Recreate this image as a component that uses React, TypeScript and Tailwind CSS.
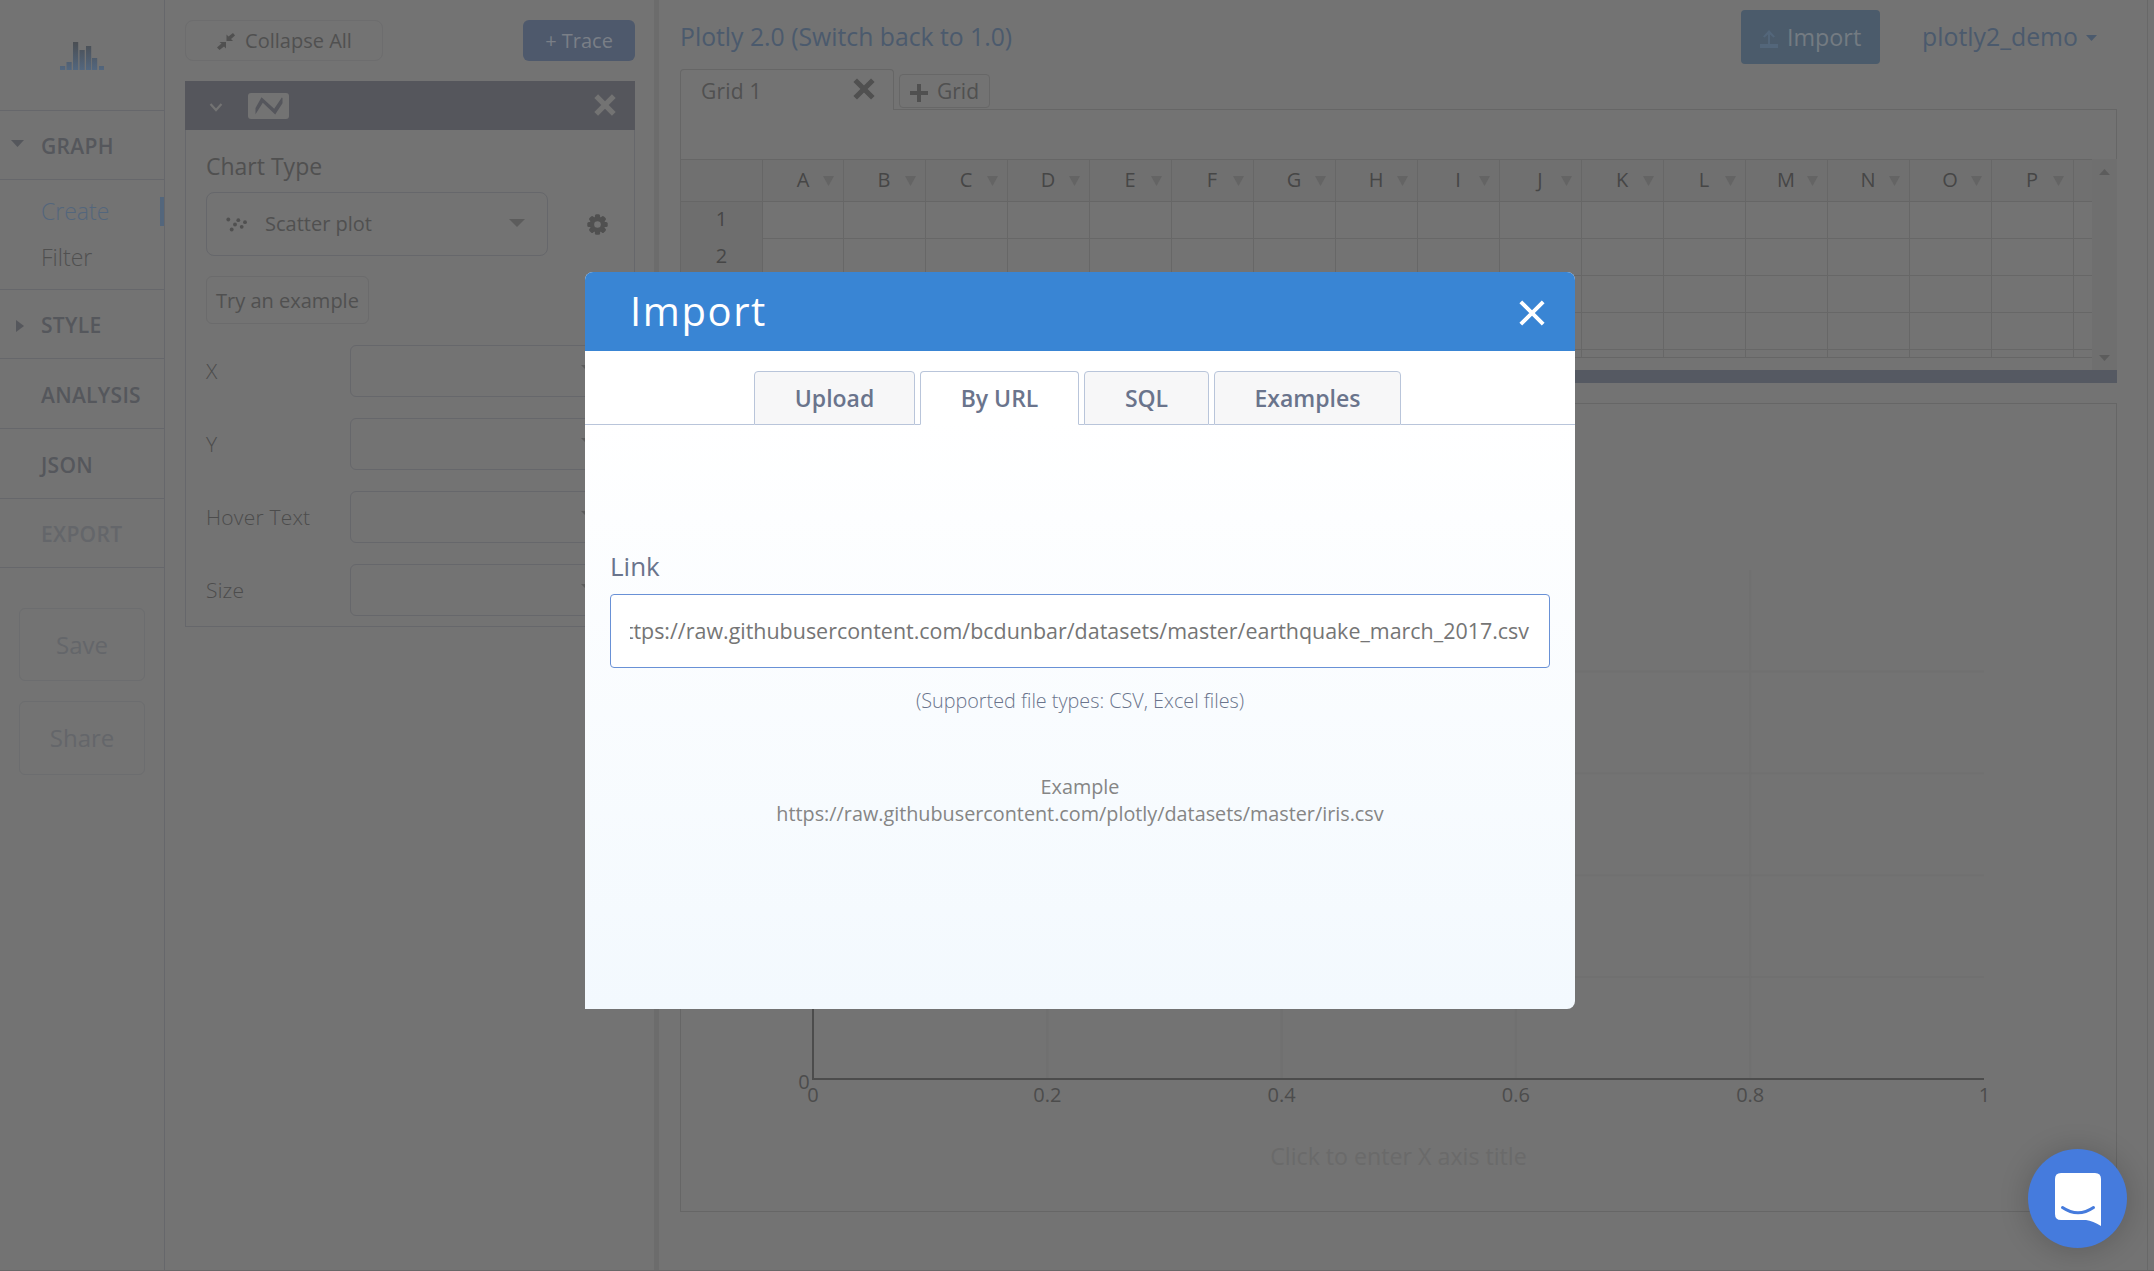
import React from "react";

const columns = "ABCDEFGHIJKLMNOP".split("");

function Logo() {
  const bars = [
    [0, 25, 4],
    [6.5, 21, 8],
    [13, 1, 28],
    [19.5, 9, 20],
    [26, 5, 24],
    [32, 17, 12],
    [39, 25, 4],
  ];
  return (
    <svg width="44" height="29" viewBox="0 0 44 29">
      <defs>
        <linearGradient id="logo" gradientUnits="userSpaceOnUse" x1="0" y1="0" x2="0" y2="29">
          <stop offset="0" stopColor="#4a4d51" />
          <stop offset="1" stopColor="#53677f" />
        </linearGradient>
      </defs>
      {bars.map(([x, y, h]) => (
        <rect key={x} x={x} y={y} width="5.2" height={h} fill="url(#logo)" />
      ))}
    </svg>
  );
}

function Cross({ size, width, className }: { size: number; width: number; className: string }) {
  return (
    <svg width={size} height={size} viewBox="0 0 20 20" className={className}>
      <path d="M2 2 L18 18 M18 2 L2 18" stroke="currentColor" strokeWidth={width} fill="none" />
    </svg>
  );
}

function NavHeading({ label, arrow, muted, height }: { label: string; arrow?: "down" | "right"; muted?: boolean; height: string }) {
  return (
    <div className={`flex items-center border-b border-[#66676b] ${height}`}>
      <div className="flex w-[41px] shrink-0 justify-end pr-[17px]">
        {arrow === "down" && (
          <svg width="13" height="7" viewBox="0 0 13 7" className="mb-1 text-[#55575c]">
            <path d="M0 0H13L6.5 7Z" fill="currentColor" />
          </svg>
        )}
        {arrow === "right" && (
          <svg width="8" height="12" viewBox="0 0 8 12" className="mt-1 text-[#55575c]">
            <path d="M0 0V12L8 6Z" fill="currentColor" />
          </svg>
        )}
      </div>
      <span className={`pt-0.5 text-[21px] leading-7 font-semibold tracking-[0.3px] ${muted ? "text-[#64666a]" : "text-[#55575c]"}`}>{label}</span>
    </div>
  );
}

function Sidebar() {
  return (
    <aside className="flex w-[165px] shrink-0 flex-col border-r border-[#66676b]">
      <div className="flex h-[111px] items-center justify-center border-b border-[#66676b]">
        <Logo />
      </div>
      <NavHeading label="GRAPH" arrow="down" height="h-[69px]" />
      <div className="flex h-[110px] flex-col border-b border-[#66676b] pt-[8px]">
        <div className="flex h-[46px] items-center justify-between pl-[41px]">
          <span className="text-[23px] font-light text-[#53667c]">Create</span>
          <span className="h-[29px] w-1 bg-[#53667c]" />
        </div>
        <div className="flex h-[46px] items-center pl-[41px] text-[23px] font-light text-[#505050]">Filter</div>
      </div>
      <NavHeading label="STYLE" arrow="right" height="h-[69px]" />
      <NavHeading label="ANALYSIS" height="h-[70px]" />
      <NavHeading label="JSON" height="h-[70px]" />
      <NavHeading label="EXPORT" muted height="h-[69px]" />
      <div className="flex flex-col gap-[20px] px-[19px] pt-[40px] text-2xl text-[#64666a]">
        <div className="flex h-[73px] items-center justify-center rounded-md border border-[#6c6d6f]">Save</div>
        <div className="flex h-[74px] items-center justify-center rounded-md border border-[#6c6d6f]">Share</div>
      </div>
    </aside>
  );
}

function Caret({ className }: { className: string }) {
  return (
    <svg width="16" height="8" viewBox="0 0 16 8" className={className}>
      <path d="M0 0H16L8 8Z" fill="currentColor" />
    </svg>
  );
}

function Gear() {
  return (
    <svg width="21" height="21" viewBox="-10.5 -10.5 21 21">
      {[0, 45, 90, 135].map((a) => (
        <rect key={a} x="-2.6" y="-10.2" width="5.2" height="20.4" rx="1.5" fill="#505050" transform={`rotate(${a})`} />
      ))}
      <circle r="7.8" fill="#505050" />
      <circle r="3.3" fill="#737373" />
    </svg>
  );
}

function TracePanel() {
  return (
    <section className="flex w-[489px] shrink-0 flex-col px-5 pt-5 pr-[19px]">
      <div className="flex h-[41px] justify-between">
        <div className="flex w-[198px] items-center justify-center gap-[9px] rounded-lg border border-[#6d6d6e] pl-px text-xl text-[#505050]">
          <svg width="19" height="17" viewBox="0 0 19 17" className="mt-0.5 text-[#505050]">
            <path d="M0 14.5 4.5 10.5 2.5 9H9V15.5L7 13.5 2.5 17ZM18 2.5 14 6 16 8H9.5V1.5L11.5 3.5 16 0Z" fill="currentColor" />
          </svg>
          <span>Collapse All</span>
        </div>
        <div className="flex w-[112px] items-center justify-center rounded-md bg-[#4e596c] text-xl text-[#7a7f87]">+ Trace</div>
      </div>
      <div className="mt-5 flex h-[49px] items-center bg-[#55565c] pr-[19px] pl-5 text-[#737373]">
        <svg width="14" height="9" viewBox="0 0 14 9" className="mt-1 ml-1">
          <path d="M1.5 1 7 7 12.500 1" stroke="currentColor" strokeWidth="2.2" fill="none" />
        </svg>
        <div className="ml-[25px] flex h-[26px] w-[41px] items-center justify-center rounded-[3px] bg-[#737373]">
          <svg width="28" height="18" viewBox="0 0 28 18">
            <path d="M0.500 17.300V11L6.500 0.200 19.200 11.700 26.800 0.500 27.500 1V6.300L20.200 17.500 7.800 5.700Z" fill="#55565c" />
          </svg>
        </div>
        <Cross size={22} width={4.8} className="mb-px ml-auto" />
      </div>
      <div className="flex h-[497px] flex-col border border-t-0 border-[#66676b] px-5">
        <div className="mt-[19px] flex h-[34px] items-center text-[23px] text-[#505050]">Chart Type</div>
        <div className="mt-[9px] flex h-[64px] items-center">
          <div className="flex h-full w-[342px] items-center rounded-lg border border-[#66676b] pr-5 pl-[19px] text-[#505050]">
            <svg width="22" height="15" viewBox="0 0 22 15">
              {[[2.3, 2.5], [12.3, 3.2], [19, 5.2], [9, 7.5], [15.7, 9.8], [5.7, 12.5]].map(([x, y]) => (
                <circle key={x} cx={x} cy={y} r="1.900" fill="currentColor" />
              ))}
            </svg>
            <span className="ml-[17px] text-xl">Scatter plot</span>
            <Caret className="mr-[2px] mb-0.5 ml-auto text-[#5c5c5c]" />
          </div>
          <div className="ml-[39px]">
            <Gear />
          </div>
        </div>
        <div className="mt-5 flex h-[48px] w-[163px] items-center justify-center rounded-md border border-[#6b6b6c] pt-0.5 text-xl whitespace-nowrap text-[#505050]">
          Try an example
        </div>
        <div className="mt-[21px] flex flex-col gap-[21px]">
          {["X", "Y", "Hover Text", "Size"].map((label) => (
            <div key={label} className="flex h-[52px] items-center">
              <span className="w-[144px] pt-0.5 text-[21px] font-light tracking-[0.2px] text-[#4c4c4c]">{label}</span>
              <div className="flex h-full flex-1 items-center justify-end rounded-md border border-[#66676b] pr-[16px]">
                <Caret className="mb-1 text-[#5c5c5c]" />
              </div>
            </div>
          ))}
        </div>
      </div>
    </section>
  );
}

function DataGrid() {
  return (
    <div className="flex h-[261px] flex-col border border-t-0 border-b-0 border-[#666]">
      <div className="h-[49px] shrink-0" />
      <div className="-mr-px flex h-[212px]">
        <div className="flex-1 overflow-hidden">
          <div className="flex h-[43px] border-y border-[#666] bg-[#707070]">
            <div className="w-[82px] shrink-0 border-r border-[#666]" />
            {columns.map((c, i) => (
              <div key={c} className={`flex shrink-0 items-center justify-between border-r border-[#676767] pr-[9px] pl-[20px] text-xl text-[#464646] ${i === 0 ? "w-[81px]" : "w-[82px]"}`}>
                <span className="w-[40px] pb-0.5 text-center">{c}</span>
                <svg width="11" height="10" viewBox="0 0 11 10">
                  <path d="M0 0H11L5.500 10Z" fill="#646464" />
                </svg>
              </div>
            ))}
          </div>
          <div className="h-[156px] overflow-hidden border-b border-[#666]">
            {["1", "2", "", "", ""].map((r, n) => (
              <div key={n} className="flex h-[37px]">
                <div className="flex w-[82px] shrink-0 items-center justify-center border-r border-[#666] bg-[#6e6e6e] pb-[3px] text-xl text-[#464646]">{r}</div>
                {columns.map((c, i) => (
                  <div key={c} className={`shrink-0 border-r border-b border-[#676767] ${i === 0 ? "w-[81px]" : "w-[82px]"}`} />
                ))}
                <div className="flex-1 border-b border-[#676767]" />
              </div>
            ))}
          </div>
        </div>
        <div className="flex w-[25px] flex-col items-center justify-between bg-[#6f6f6f] py-[10px]">
          <svg width="11" height="6" viewBox="0 0 11 6">
            <path d="M0 6H11L5.500 0Z" fill="#5c5c5c" />
          </svg>
          <svg width="11" height="6" viewBox="0 0 11 6">
            <path d="M0 0H11L5.500 6Z" fill="#5c5c5c" />
          </svg>
        </div>
      </div>
    </div>
  );
}

function Plot() {
  const ticks = ["0", "0.2", "0.4", "0.6", "0.8", "1"];
  return (
    <svg width="1435" height="807" viewBox="681 404 1435 807" className="block">
      {[1, 2, 3, 4].map((i) => (
        <g key={i} stroke="#707070" strokeWidth="2">
          <path d={`M${813 + i * 234.3} 570V1078`} />
          <path d={`M813 ${1079 - i * 101.9}H1984`} />
        </g>
      ))}
      <path d="M813 570V1080M812 1079H1984" stroke="#4c4c4c" strokeWidth="2" />
      <g fill="#4c4c4c" fontSize="20" textAnchor="middle">
        <text x="804" y="1089">0</text>
        {ticks.map((t, i) => (
          <text key={t} x={813 + i * 234.3} y="1102">{t}</text>
        ))}
      </g>
      <text x="1398.500" y="1165" fontSize="23.200" textAnchor="middle" fill="#6a6a6a">Click to enter X axis title</text>
    </svg>
  );
}

function Workspace() {
  return (
    <main className="flex flex-1 flex-col border-l-[5px] border-[#6c6c6c] pr-[30px] pl-[21px]">
      <div className="flex h-[69px] items-center pt-[5px]">
        <span className="text-[24.750px] text-[#4b5a6d]">Plotly 2.0 (Switch back to 1.0)</span>
        <div className="ml-auto flex h-[54px] w-[139px] items-center justify-center gap-[9px] rounded-[4px] bg-[#4b5b6b] text-[23.300px] text-[#747b82]">
          <svg width="18" height="18" viewBox="0 0 18 18" className="mt-1">
            <path d="M0 14H18V18H0ZM8 14V4.500L4.500 7.500 3 6.500 9 0 15 6.500 13.500 7.500 10 4.500V14Z" fill="#53667a" />
          </svg>
          <span>Import</span>
        </div>
        <div className="ml-[42px] flex items-center gap-2 pr-[20px] text-[24.800px] text-[#4b5a6d]">
          <span>plotly2_demo</span>
          <svg width="11" height="6" viewBox="0 0 11 6" className="mt-0.5">
            <path d="M0 0H11L5.500 6Z" fill="currentColor" />
          </svg>
        </div>
      </div>
      <div className="flex h-[41px] text-[21px] text-[#505050]">
        <div className="flex w-[214px] items-center justify-between rounded-t border border-b-0 border-[#666] pr-[18px] pb-px pl-5">
          <span className="pt-1 tracking-[0.2px]">Grid 1</span>
          <Cross size={22} width={4.6} className="mb-px" />
        </div>
        <div className="flex flex-1 border-b border-[#666] pt-[5px] pl-[5px]">
          <div className="flex h-[34px] w-[91px] items-center justify-center gap-[9px] rounded border border-[#676767] pt-0.5">
            <svg width="18" height="18" viewBox="0 0 18 18" className="mt-0.5">
              <path d="M9 0V18M0 9H18" stroke="currentColor" strokeWidth="4" />
            </svg>
            <span>Grid</span>
          </div>
        </div>
      </div>
      <DataGrid />
      <div className="-mt-px h-[13px] shrink-0 bg-[#555962]" />
      <div className="mt-5 h-[809px] shrink-0 border border-[#666]">
        <Plot />
      </div>
    </main>
  );
}

const tabs = [
  { label: "Upload", width: "w-[161px]", gap: "w-[5px]" },
  { label: "By URL", width: "w-[159px]", gap: "w-[5px]" },
  { label: "SQL", width: "w-[125px]", gap: "w-[5px]" },
  { label: "Examples", width: "w-[187px]", gap: "flex-1" },
];

function ImportModal() {
  return (
    <div className="absolute top-[272px] left-[585px] flex h-[737px] w-[990px] flex-col overflow-hidden rounded-lg rounded-bl-none bg-linear-to-b from-white from-20% to-[#f3f9fe] text-[#6a748c]">
      <div className="flex h-[79px] shrink-0 items-center justify-between bg-[#3985d4] pr-[29px] pl-[45px] text-white">
        <h1 className="pb-0.5 text-[40px] leading-[76px] tracking-[1.600px]">Import</h1>
        <Cross size={28} width={2.8} className="mt-0.5" />
      </div>
      <div className="flex h-[74px] shrink-0 bg-white text-[23px] font-semibold">
        <div className="w-[169px] border-b border-[#b9c5da]" />
        {tabs.map(({ label, width, gap }) => (
          <React.Fragment key={label}>
            <div className={`mt-[20px] flex shrink-0 items-center justify-center rounded-t-[4px] border border-[#b9c5da] ${width} ${label === "By URL" ? "border-b-white bg-white" : "bg-[#f7f7f8]"}`}>
              {label}
            </div>
            <div className={`border-b border-[#b9c5da] ${gap}`} />
          </React.Fragment>
        ))}
      </div>
      <div className="px-[25px] pt-[123px]">
        <div className="text-[26px] leading-[36px]">Link</div>
        <div className="mt-[10px] flex h-[74px] items-center rounded-[4px] border border-[#6991d6] bg-white px-[19px]">
          <div className="flex flex-1 justify-end overflow-hidden pr-px text-[21.450px] whitespace-nowrap text-[#757575]">
            <span>https://raw.githubusercontent.com/bcdunbar/datasets/master/earthquake_march_2017.csv</span>
          </div>
        </div>
      </div>
      <div className="mt-[19px] text-center text-[19.800px] leading-[28px] font-light">(Supported file types: CSV, Excel files)</div>
      <div className="mt-[58px] text-center text-[19.800px] leading-[27px] text-[#858585]">
        <div>Example</div>
        <div>https://raw.githubusercontent.com/plotly/datasets/master/iris.csv</div>
      </div>
    </div>
  );
}

function ChatButton() {
  return (
    <div className="absolute top-[1149px] left-[2028px] flex size-[99px] items-center justify-center rounded-full bg-[#457bdd] shadow-[0_2px_30px_rgba(0,0,0,0.2)]">
      <svg width="46" height="53" viewBox="0 0 46 53" className="mt-0.5">
        <path d="M5 0H40Q46 0 46 6V53Q38 48 31 47H6Q0 47 0 41V6Q0 0 6 0Z" fill="white" />
        <path d="M7.500 34.500Q23 45 38.500 34.500" stroke="#457bdd" strokeWidth="3" strokeLinecap="round" fill="none" />
      </svg>
    </div>
  );
}

export default function App() {
  return (
    <div className="relative flex h-[1271px] w-[2154px] overflow-hidden border-b border-[#676767] bg-[#737373] font-['Open_Sans',sans-serif]">
      <Sidebar />
      <TracePanel />
      <Workspace />
      <div className="w-[7px] border-l border-[#686868]" />
      <ImportModal />
      <ChatButton />
    </div>
  );
}
